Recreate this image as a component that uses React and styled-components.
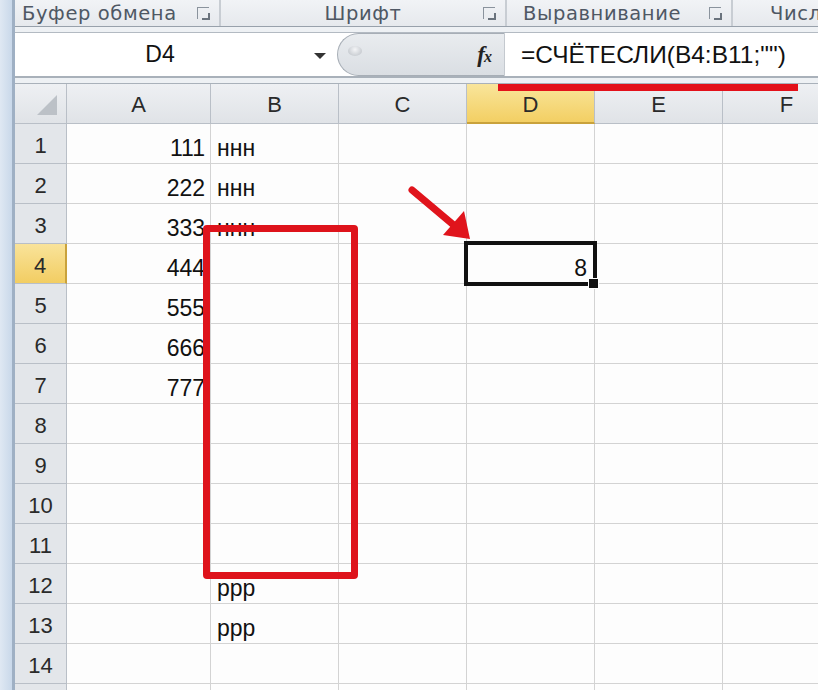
import React from "react";
import styled, { createGlobalStyle, css } from "styled-components";

const Global = createGlobalStyle`
  html, body { margin: 0; padding: 0; background: #fff; }
  body { font-family: "Liberation Sans", Arial, sans-serif; }
`;

const Page = styled.div`
  position: relative;
  width: 818px;
  height: 690px;
  overflow: hidden;
  display: flex;
  background: #fdfdfd;
`;

const LeftStrip = styled.div`
  width: 12px;
  flex: none;
  background: linear-gradient(90deg, #dfe8f3, #c9d8ea);
  border-right: 3px solid #9fb0c4;
`;

const Main = styled.div`
  flex: 1;
  min-width: 0;
  display: flex;
  flex-direction: column;
  & > * {
    flex-shrink: 0;
  }
`;

const Ribbon = styled.div`
  height: 26px;
  display: flex;
  background: linear-gradient(#f1f3f6, #e6e9ed);
  border-bottom: 1px solid #98a1ab;
`;

const Group = styled.div`
  width: ${(p) => p.$w}px;
  flex: none;
  display: flex;
  align-items: center;
  justify-content: ${(p) => (p.$center ? "center" : "flex-start")};
  padding-left: ${(p) => p.$pl || 0}px;
  box-sizing: border-box;
  position: relative;
  border-right: 2px solid #c8cdd3;
  font-family: "DejaVu Sans", sans-serif;
  font-size: 19.5px;
  letter-spacing: 0.6px;
  color: #4f5864;
  white-space: nowrap;
`;

const Launcher = styled.span`
  position: absolute;
  right: 10px;
  top: 7px;
  width: 11px;
  height: 11px;
  border-left: 1px solid #8a939d;
  border-top: 1px solid #8a939d;
  &::after {
    content: "";
    position: absolute;
    right: -1px;
    bottom: -1px;
    width: 6px;
    height: 5px;
    border-right: 2px solid #6a737d;
    border-bottom: 2px solid #6a737d;
  }
`;

const Gap = styled.div`
  height: ${(p) => p.$h}px;
  background: #eef1f4;
  border-bottom: 1px solid ${(p) => p.$line || "#b3bac2"};
`;

const FormulaBar = styled.div`
  height: 43px;
  display: flex;
  background: #fff;
  border-bottom: 2px solid #a9b1ba;
`;

const NameBox = styled.div`
  width: 322px;
  flex: none;
  display: flex;
  align-items: center;
  position: relative;
  font-size: 23px;
  color: #111;
`;

const NameText = styled.span`
  width: 290px;
  text-align: center;
`;

const DropArrow = styled.span`
  position: absolute;
  left: 299px;
  top: 20px;
  width: 0;
  height: 0;
  border-left: 6px solid transparent;
  border-right: 6px solid transparent;
  border-top: 6px solid #333;
`;

const FxArea = styled.div`
  width: 168px;
  flex: none;
  height: 43px;
  box-sizing: border-box;
  border-radius: 22px 0 0 22px;
  border: 1px solid #a7aeb6;
  border-right: 1px solid #c4c9cf;
  background: linear-gradient(#e9ecef, #dadee3);
  display: flex;
  align-items: center;
  justify-content: space-between;
  padding: 0 13px 0 10px;
`;

const Knob = styled.span`
  width: 14px;
  height: 10px;
  border-radius: 50%;
  background: radial-gradient(ellipse at 50% 35%, #f4f5f7, #b9bec4);
  margin-top: -8px;
`;

const Fx = styled.span`
  font-family: "Liberation Serif", serif;
  font-style: italic;
  font-weight: bold;
  font-size: 23px;
  color: #222;
  letter-spacing: -1px;
  & > span {
    font-size: 16px;
  }
`;

const FormulaInput = styled.div`
  flex: 1;
  display: flex;
  align-items: center;
  padding-left: 16px;
  font-size: 24.5px;
  color: #111;
  white-space: nowrap;
`;

const Sheet = styled.div`
  display: grid;
  grid-template-columns: 52px 144px repeat(5, 128px);
  grid-auto-rows: 40px;
`;

const headBase = css`
  box-sizing: border-box;
  display: flex;
  align-items: center;
  justify-content: center;
  color: #2a2a2a;
  font-size: 22px;
  border-right: 1px solid #b9bfc7;
  border-bottom: 1px solid #b9bfc7;
`;

const ColHead = styled.div`
  ${headBase}
  padding-top: 3px;
  background: ${(p) =>
    p.$active
      ? "linear-gradient(#f9e59b, #f3cf63)"
      : "linear-gradient(#eef0f3, #e0e3e7)"};
  ${(p) => p.$active && "border-bottom: 2px solid #c9a23c;"}
`;

const Corner = styled.div`
  ${headBase}
  position: relative;
  background: linear-gradient(#eef0f3, #e0e3e7);
  &::after {
    content: "";
    position: absolute;
    right: 9px;
    bottom: 8px;
    width: 0;
    height: 0;
    border-left: 20px solid transparent;
    border-bottom: 20px solid #bcc1c7;
  }
`;

const RowHead = styled.div`
  ${headBase}
  padding-top: 4px;
  background: ${(p) =>
    p.$active ? "linear-gradient(#f9e39a, #f2cd62)" : "#e3e6ea"};
  ${(p) => p.$active && "border-right: 2px solid #c9a23c;"}
`;

const Cell = styled.div`
  box-sizing: border-box;
  position: relative;
  display: flex;
  align-items: flex-end;
  justify-content: ${(p) => (p.$right ? "flex-end" : "flex-start")};
  padding: 0 ${(p) => (p.$right ? 5 : 0)}px 3px ${(p) => (p.$right ? 0 : 6)}px;
  border-right: 1px solid #d3d3d3;
  border-bottom: 1px solid #d3d3d3;
  font-size: 23px;
  line-height: 1;
  color: #111;
  white-space: nowrap;
  background: #fdfdfd;
  ${(p) =>
    p.$selected &&
    css`
      z-index: 1;
      padding-right: 7px;
      &::after {
        content: "";
        position: absolute;
        left: -3px;
        top: -3px;
        right: -3px;
        bottom: -3px;
        border: 4px solid #111;
        pointer-events: none;
      }
      &::before {
        content: "";
        position: absolute;
        right: -5px;
        bottom: -6px;
        width: 9px;
        height: 9px;
        background: #111;
        border: 1px solid #fff;
        z-index: 2;
      }
    `}
`;

const RedBox = styled.div`
  position: absolute;
  z-index: 3;
  left: 203px;
  top: 225px;
  width: 155px;
  height: 354px;
  box-sizing: border-box;
  border: 7px solid #de131b;
  border-radius: 4px;
`;

const RedUnderline = styled.div`
  position: absolute;
  z-index: 3;
  left: 498px;
  top: 84px;
  width: 300px;
  height: 7px;
  background: #e3111a;
`;

const ArrowSvg = styled.svg`
  position: absolute;
  z-index: 3;
  left: 400px;
  top: 180px;
`;

const COLS = ["A", "B", "C", "D", "E", "F"];
const colA = { 1: "111", 2: "222", 3: "333", 4: "444", 5: "555", 6: "666", 7: "777" };
const colB = { 1: "ннн", 2: "ннн", 3: "ннн", 12: "ррр", 13: "ррр" };

export default function App() {
  const rows = Array.from({ length: 15 }, (_, i) => i + 1);
  return (
    <>
      <Global />
      <Page>
        <LeftStrip />
        <Main>
          <Ribbon>
            <Group $w={206} $pl={7}>
              Буфер обмена
              <Launcher />
            </Group>
            <Group $w={286} $center>
              Шрифт
              <Launcher />
            </Group>
            <Group $w={226} $pl={16}>
              Выравнивание
              <Launcher />
            </Group>
            <Group $w={100} $pl={37}>
              Числовой
            </Group>
          </Ribbon>
          <Gap $h={5} />
          <FormulaBar>
            <NameBox>
              <NameText>D4</NameText>
              <DropArrow />
            </NameBox>
            <FxArea>
              <Knob />
              <Fx>
                f<span>x</span>
              </Fx>
            </FxArea>
            <FormulaInput>=СЧЁТЕСЛИ(B4:B11;"")</FormulaInput>
          </FormulaBar>
          <Gap $h={5} $line="#a9b1ba" />
          <Sheet>
            <Corner />
            {COLS.map((c) => (
              <ColHead key={c} $active={c === "D"}>
                {c}
              </ColHead>
            ))}
            {rows.map((r) => (
              <React.Fragment key={r}>
                <RowHead $active={r === 4}>{r < 15 ? r : ""}</RowHead>
                <Cell $right>{colA[r] || ""}</Cell>
                <Cell>{colB[r] || ""}</Cell>
                <Cell />
                <Cell $right $selected={r === 4}>
                  {r === 4 ? "8" : ""}
                </Cell>
                <Cell />
                <Cell />
              </React.Fragment>
            ))}
          </Sheet>
        </Main>
        <RedUnderline />
        <RedBox />
        <ArrowSvg width="80" height="70" viewBox="0 0 80 70">
          <line x1="12" y1="10" x2="56" y2="47" stroke="#e0141c" strokeWidth="7" strokeLinecap="round" />
          <polygon points="70,59 43,55 64,31" fill="#e0141c" />
        </ArrowSvg>
      </Page>
    </>
  );
}
